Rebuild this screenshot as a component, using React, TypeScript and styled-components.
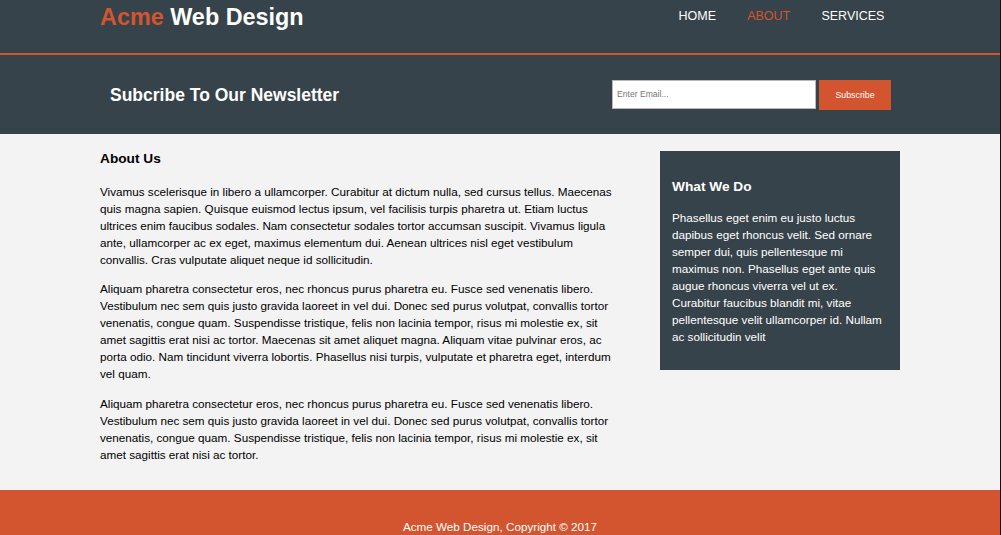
import React from "react";
import styled, { createGlobalStyle } from "styled-components";

const DARK = "#37434a";
const ORANGE = "#d2552f";
const LIGHT = "#f3f3f3";

const GlobalStyle = createGlobalStyle`
  html, body {
    margin: 0;
    padding: 0;
    overflow: hidden;
    background: ${LIGHT};
  }
  body {
    font-family: "Liberation Sans", Arial, Helvetica, sans-serif;
    font-size: 11.7px;
    line-height: 17px;
    color: #000;
  }
  * { box-sizing: border-box; }
`;

const Page = styled.div`
  border-right: 1px solid #111;
  min-height: 535px;
  background: ${LIGHT};
`;

const Container = styled.div`
  width: 80%;
  margin: 0 auto;
`;

const Header = styled.header`
  background: ${DARK};
  color: #fff;
  height: 55px;
  border-bottom: 2px solid ${ORANGE};
`;

const HeaderInner = styled(Container)`
  display: flex;
  justify-content: space-between;
  align-items: flex-start;
  padding-top: 3px;
`;

const Logo = styled.h1`
  margin: 0;
  font-size: 23.4px;
  line-height: 28px;
  font-weight: bold;
  color: #fff;
`;

const Highlight = styled.span`
  color: ${ORANGE};
`;

const NavList = styled.ul`
  display: flex;
  list-style: none;
  margin: 0;
  padding: 5px 0 0;
`;

const NavItem = styled.li<{ $active?: boolean }>`
  padding: 0 15.6px;
  font-size: 12.5px;
  line-height: 16px;
  text-transform: uppercase;
  color: ${(p) => (p.$active ? ORANGE : "#fff")};
`;

const Newsletter = styled.section`
  background: ${DARK};
  color: #fff;
  height: 79px;
`;

const NewsletterInner = styled(Container)`
  height: 100%;
  display: flex;
  align-items: center;
  justify-content: space-between;
`;

const NewsTitle = styled.h1`
  margin: 0;
  padding-left: 10px;
  font-size: 17.5px;
  line-height: 20px;
  font-weight: bold;
`;

const Form = styled.form`
  display: flex;
  align-items: flex-start;
  gap: 3px;
  padding-right: 9px;
`;

const EmailInput = styled.input`
  width: 204px;
  height: 29px;
  margin: 0;
  padding: 0 4px;
  border: 1px solid #b9b9b9;
  background: #fff;
  font-family: "Liberation Sans", Arial, sans-serif;
  font-size: 8.6px;
  outline: none;
  &::placeholder {
    color: #777;
  }
`;

const SubscribeButton = styled.button`
  width: 72px;
  height: 30px;
  margin: 0;
  padding: 0;
  border: none;
  background: ${ORANGE};
  color: #fff;
  font-family: "Liberation Sans", Arial, sans-serif;
  font-size: 8.8px;
`;

const Content = styled(Container)`
  display: flex;
  justify-content: space-between;
  align-items: flex-start;
  padding: 16.5px 0 15px;
`;

const Main = styled.article`
  width: 65%;
`;

const Heading = styled.h1`
  margin: 0 0 16px;
  font-size: 13.7px;
  line-height: 16px;
  font-weight: bold;
`;

const Para = styled.p`
  margin: 0 0 12.5px;
`;

const Sidebar = styled.aside`
  width: 30%;
  background: ${DARK};
  color: #fff;
  padding: 12px 12px 13px;
`;

const SideHeading = styled(Heading)`
  margin: 16px 0 14.5px;
  color: #fff;
`;

const SideText = styled.p`
  margin: 0 0 12px;
`;

const Footer = styled.footer`
  background: ${ORANGE};
  color: #fff;
  text-align: center;
  padding: 28px 0;
`;

const FooterText = styled.p`
  margin: 0;
`;

export default function App() {
  return (
    <>
      <GlobalStyle />
      <Page>
        <Header>
          <HeaderInner>
            <Logo>
              <Highlight>Acme</Highlight> Web Design
            </Logo>
            <nav>
              <NavList>
                <NavItem>Home</NavItem>
                <NavItem $active>About</NavItem>
                <NavItem>Services</NavItem>
              </NavList>
            </nav>
          </HeaderInner>
        </Header>
        <Newsletter>
          <NewsletterInner>
            <NewsTitle>Subcribe To Our Newsletter</NewsTitle>
            <Form onSubmit={(e) => e.preventDefault()}>
              <EmailInput type="email" placeholder="Enter Email..." />
              <SubscribeButton type="submit">Subscribe</SubscribeButton>
            </Form>
          </NewsletterInner>
        </Newsletter>
        <Content>
          <Main>
            <Heading>About Us</Heading>
            <Para>
              Vivamus scelerisque in libero a ullamcorper. Curabitur at dictum nulla, sed cursus tellus. Maecenas quis magna sapien. Quisque euismod lectus ipsum, vel facilisis turpis pharetra ut. Etiam luctus ultrices enim faucibus sodales. Nam consectetur sodales tortor accumsan suscipit. Vivamus ligula ante, ullamcorper ac ex eget, maximus elementum dui. Aenean ultrices nisl eget vestibulum convallis. Cras vulputate aliquet neque id sollicitudin.
            </Para>
            <Para>
              Aliquam pharetra consectetur eros, nec rhoncus purus pharetra eu. Fusce sed venenatis libero. Vestibulum nec sem quis justo gravida laoreet in vel dui. Donec sed purus volutpat, convallis tortor venenatis, congue quam. Suspendisse tristique, felis non lacinia tempor, risus mi molestie ex, sit amet sagittis erat nisi ac tortor. Maecenas sit amet aliquet magna. Aliquam vitae pulvinar eros, ac porta odio. Nam tincidunt viverra lobortis. Phasellus nisi turpis, vulputate et pharetra eget, interdum vel quam.
            </Para>
            <Para>
              Aliquam pharetra consectetur eros, nec rhoncus purus pharetra eu. Fusce sed venenatis libero. Vestibulum nec sem quis justo gravida laoreet in vel dui. Donec sed purus volutpat, convallis tortor venenatis, congue quam. Suspendisse tristique, felis non lacinia tempor, risus mi molestie ex, sit amet sagittis erat nisi ac tortor.
            </Para>
          </Main>
          <Sidebar>
            <SideHeading>What We Do</SideHeading>
            <SideText>
              Phasellus eget enim eu justo luctus dapibus eget rhoncus velit. Sed ornare semper dui, quis pellentesque mi maximus non. Phasellus eget ante quis augue rhoncus viverra vel ut ex. Curabitur faucibus blandit mi, vitae pellentesque velit ullamcorper id. Nullam ac sollicitudin velit
            </SideText>
          </Sidebar>
        </Content>
        <Footer>
          <FooterText>Acme Web Design, Copyright &copy; 2017</FooterText>
        </Footer>
      </Page>
    </>
  );
}
